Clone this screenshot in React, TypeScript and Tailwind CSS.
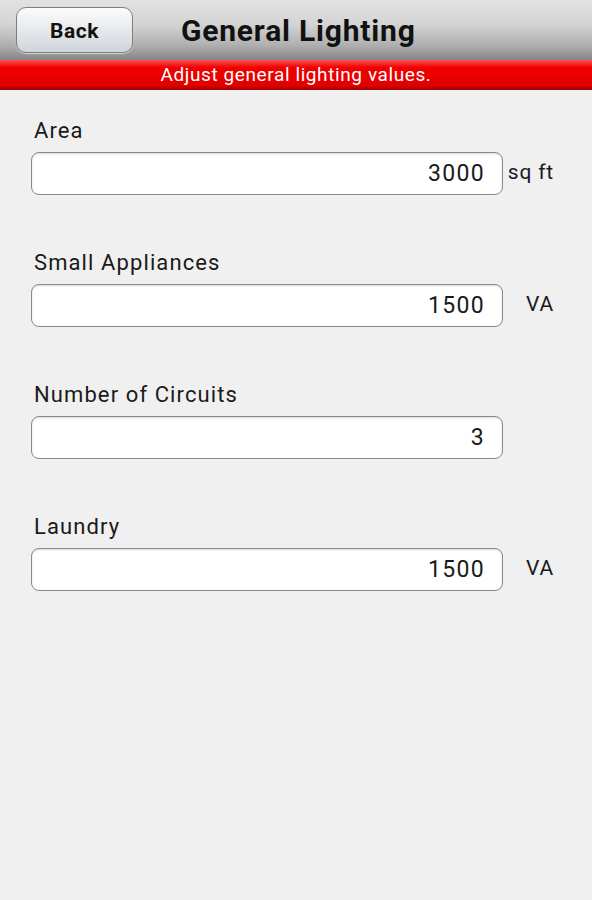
const fields = [
  { label: 'Area', value: '3000', unit: 'sq ft' },
  { label: 'Small Appliances', value: '1500', unit: 'VA' },
  { label: 'Number of Circuits', value: '3', unit: '' },
  { label: 'Laundry', value: '1500', unit: 'VA' },
];

function FieldRow({ label, value, unit }: { label: string; value: string; unit: string }) {
  return (
    <div className="flex flex-col h-[132px]">
      <div className="h-[24px] leading-[26px] text-[22px] tracking-[1.1px] text-[#1a1a1a] pl-[3px] mb-[10px]">{label}</div>
      <div className="flex items-center">
        <div className="w-[472px] h-[43px] rounded-[8px] bg-white border border-[#8a8a8a] shadow-[inset_0_1px_2px_rgba(0,0,0,0.15)] flex items-center justify-end pr-[17px] pt-[2px] text-[23px] tracking-[1.3px] text-[#1a1a1a]">
          {value}
        </div>
        <div className="w-[51px] text-right text-[21px] tracking-[0.8px] text-[#1a1a1a] -mt-[1px]">{unit}</div>
      </div>
    </div>
  );
}

export default function App() {
  return (
    <div className="w-[592px] h-[900px] bg-[#f0f0f0] flex flex-col" style={{ fontFamily: 'Roboto, "Liberation Sans", sans-serif' }}>
      <div className="h-[60px] flex items-center bg-[linear-gradient(#e2e2e2,#d4d4d4_40%,#b0b0b0_75%,#858585)]">
        <div className="ml-[16px] w-[117px] h-[46px] rounded-[10px] border border-[#7d7d7d] bg-[linear-gradient(#fbfbfb,#e6e9ec_50%,#cfd4da)] shadow-[0_1px_1px_rgba(255,255,255,0.6)] flex items-center justify-center pt-[3px] font-bold text-[21px] tracking-[0.5px] text-[#111]">
          Back
        </div>
        <div className="ml-[48px] font-bold text-[30px] tracking-[0.8px] text-[#111]">General Lighting</div>
      </div>
      <div className="h-[30px] flex items-center justify-center text-white text-[19px] tracking-[0.6px] bg-[linear-gradient(#ff5050,#f20000_25%,#e00000_85%,#a00000)]">
        Adjust general lighting values.
      </div>
      <div className="pt-[28px] pl-[31px] flex flex-col">
        {fields.map((f) => (
          <FieldRow key={f.label} {...f} />
        ))}
      </div>
    </div>
  );
}
